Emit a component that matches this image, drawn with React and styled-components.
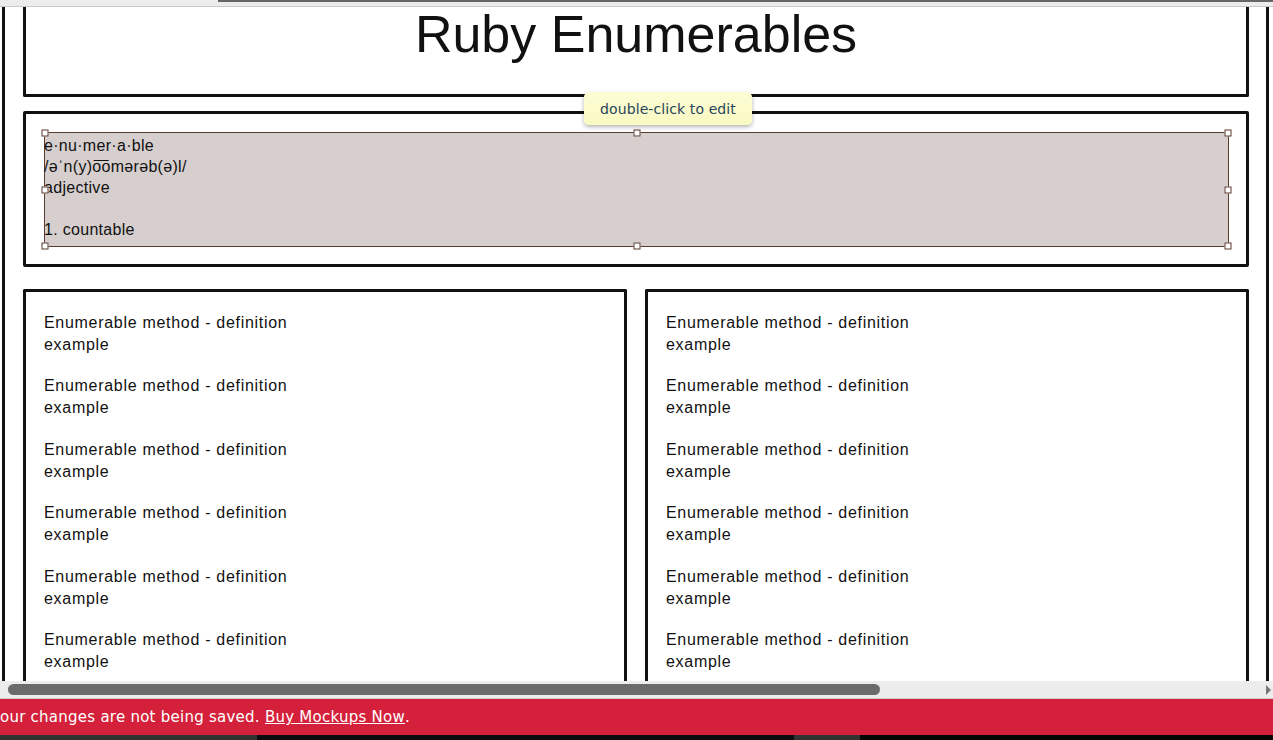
import React from "react"
import styled, { createGlobalStyle } from "styled-components"

const sketchFont = `"Liberation Sans", Arial, sans-serif`
const uiFont = `"DejaVu Sans", "Liberation Sans", sans-serif`

const GlobalStyle = createGlobalStyle`
  html, body {
    margin: 0;
    padding: 0;
    height: 740px;
    overflow: hidden;
    background: #fff;
  }
  #root {
    height: 740px;
  }
`

const Screen = styled.div`
  display: flex;
  flex-direction: column;
  width: 1273px;
  height: 740px;
  overflow: hidden;
`

const TopStrip = styled.div`
  flex: 0 0 6px;
  background: #ececec;
  border-bottom: 1px solid #c9c9c9;
`

const TopThumb = styled.div`
  margin-left: 218px;
  height: 2px;
  background: #666;
`

const Canvas = styled.div`
  flex: 0 0 674px;
  overflow: hidden;
`

const Frame = styled.div`
  box-sizing: border-box;
  width: 1267px;
  height: 100%;
  margin-left: 2px;
  padding: 0 17px 0 18px;
  border-left: 3px solid #111;
  border-right: 3px solid #111;
  font-family: ${sketchFont};
  color: #111;
`

const TitleBox = styled.div`
  box-sizing: border-box;
  height: 90px;
  padding-top: 4px;
  border: 3px solid #111;
  border-top: 0;
  border-radius: 0 0 2px 2px;
  text-align: center;
  font-size: 52px;
  line-height: 46px;
`

const DefBox = styled.div`
  position: relative;
  margin-top: 14px;
  padding: 18px 17px 17px 18px;
  border: 3px solid #111;
  border-radius: 2px;
`

const Selection = styled.div`
  position: relative;
  box-sizing: border-box;
  height: 115px;
  padding-top: 2px;
  background: #d6cfce;
  border: 1px solid #5b3a2f;
  font-size: 16px;
  line-height: 21px;
  letter-spacing: 0.3px;
`

const Handle = styled.span`
  position: absolute;
  width: 5px;
  height: 5px;
  background: #fff;
  border: 1px solid #5b3a2f;
  left: ${(p) => p.x};
  top: ${(p) => p.y};
  transform: translate(-50%, -50%);
`

const Line = styled.div`
  min-height: 21px;
  margin-left: -1px;
`

const Tooltip = styled.div`
  position: absolute;
  top: -22px;
  left: 558px;
  width: 168px;
  height: 33px;
  display: flex;
  align-items: center;
  justify-content: center;
  background: linear-gradient(#fdfdd6, #f9f9c2);
  border-radius: 5px;
  box-shadow: 0 2px 4px rgba(0, 0, 0, 0.3);
  font-family: ${uiFont};
  font-size: 14px;
  color: #27455a;
  letter-spacing: 0.1px;
`

const Columns = styled.div`
  display: grid;
  grid-template-columns: 1fr 1fr;
  gap: 18px;
  margin-top: 22px;
`

const Panel = styled.div`
  display: flex;
  flex-direction: column;
  gap: 19.4px;
  height: 420px;
  padding: 20px 18px 19px;
  border: 3px solid #111;
  border-bottom: 0;
  border-radius: 2px 2px 0 0;
`

const Item = styled.div`
  font-size: 16px;
  line-height: 22px;
  letter-spacing: 0.7px;
`

const HScroll = styled.div`
  position: relative;
  flex: 0 0 17px;
  background: #ececec;
  border-bottom: 1px solid #d0d0d0;
`

const Thumb = styled.div`
  position: absolute;
  left: 8px;
  top: 3px;
  width: 872px;
  height: 11px;
  border-radius: 6px;
  background: #6b6b6b;
`

const Arrow = styled.span`
  position: absolute;
  right: 2px;
  top: 4px;
  width: 0;
  height: 0;
  border-top: 5px solid transparent;
  border-bottom: 5px solid transparent;
  border-left: 5px solid #777;
`

const Banner = styled.div`
  flex: 0 0 36px;
  display: flex;
  align-items: center;
  background: #d4203a;
  color: #fff;
  font-family: ${uiFont};
  font-size: 15px;
  letter-spacing: 0.25px;
  white-space: nowrap;

  a {
    color: #fff;
    text-decoration: underline;
  }
`

const BottomStrip = styled.div`
  flex: 0 0 5px;
  display: flex;
`

const Seg = styled.div`
  width: ${(p) => p.w}px;
  flex: ${(p) => (p.w ? "none" : "1")};
  background: ${(p) => p.c};
`

const items = Array.from({ length: 6 })

const Column = () => (
  <Panel>
    {items.map((_, i) => (
      <Item key={i}>
        Enumerable method - definition
        <br />
        example
      </Item>
    ))}
  </Panel>
)

const App = () => {
  return (
    <Screen>
      <GlobalStyle />
      <TopStrip>
        <TopThumb />
      </TopStrip>
      <Canvas>
        <Frame>
          <TitleBox>Ruby Enumerables</TitleBox>
          <DefBox>
            <Selection>
              <Line>e·nu·mer·a·ble</Line>
              <Line>/əˈn(y)o͞omərəb(ə)l/</Line>
              <Line>adjective</Line>
              <Line />
              <Line>1. countable</Line>
              <Handle x="0%" y="0%" />
              <Handle x="50%" y="0%" />
              <Handle x="100%" y="0%" />
              <Handle x="0%" y="50%" />
              <Handle x="100%" y="50%" />
              <Handle x="0%" y="100%" />
              <Handle x="50%" y="100%" />
              <Handle x="100%" y="100%" />
            </Selection>
            <Tooltip>double-click to edit</Tooltip>
          </DefBox>
          <Columns>
            <Column />
            <Column />
          </Columns>
        </Frame>
      </Canvas>
      <HScroll>
        <Thumb />
        <Arrow />
      </HScroll>
      <Banner>
        our changes are not being saved.&nbsp;<a href="#buy">Buy Mockups Now</a>.
      </Banner>
      <BottomStrip>
        <Seg w={257} c="#333" />
        <Seg w={537} c="#0c0c10" />
        <Seg w={66} c="#333" />
        <Seg c="#050505" />
      </BottomStrip>
    </Screen>
  )
}

export default App
